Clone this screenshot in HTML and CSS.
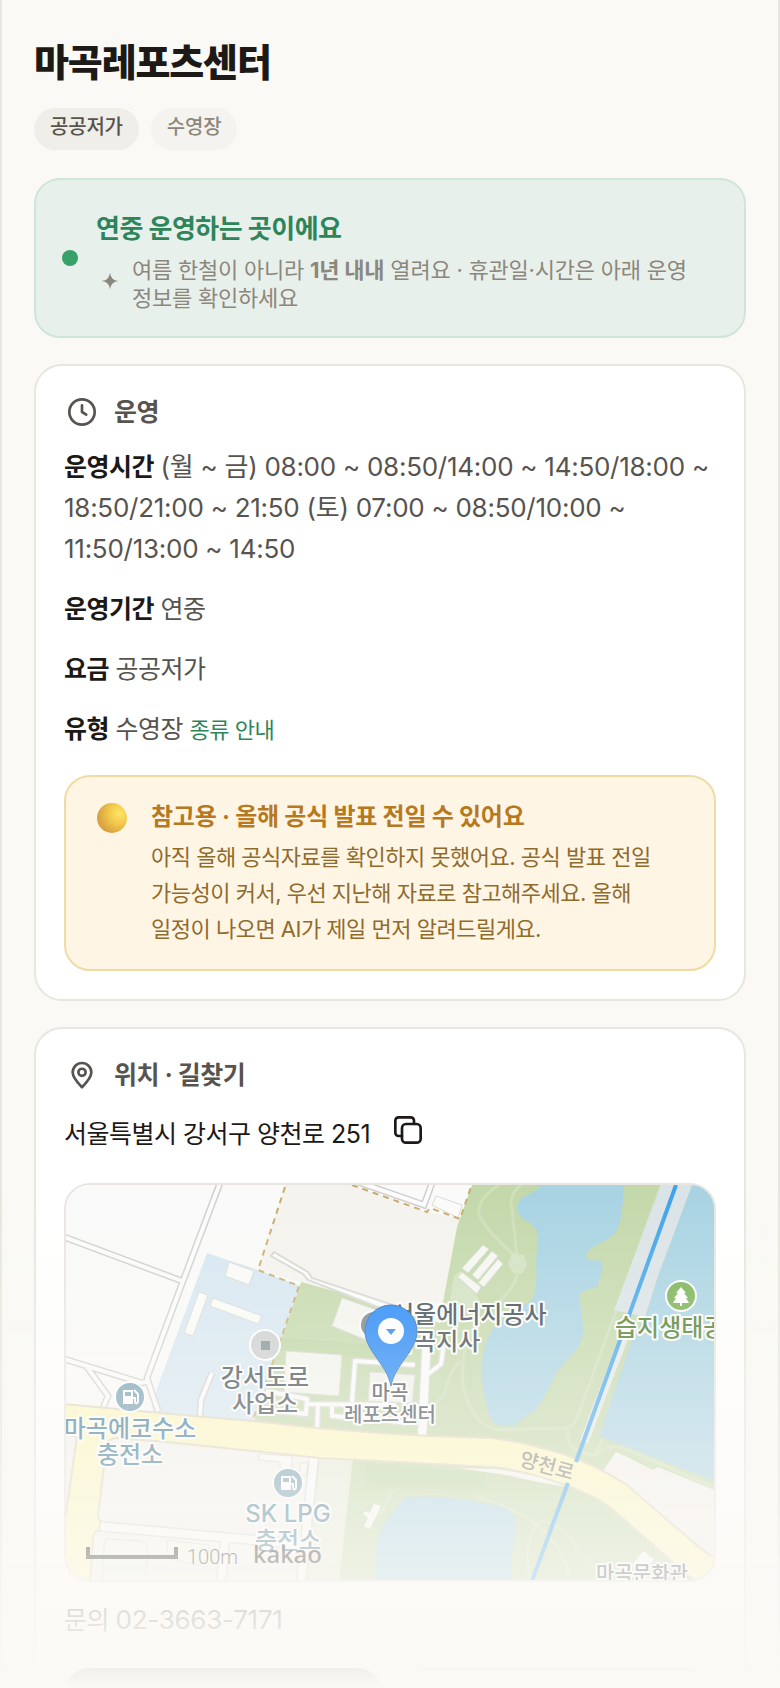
FILE: index.html
```html
<!DOCTYPE html>
<html lang="ko">
<head>
    <meta charset="UTF-8">
    <meta name="viewport" content="width=device-width, initial-scale=1.0">
    <title>마곡레포츠센터</title>
    <link rel="stylesheet" href="styles.css">
</head>
<body>
    <main class="screen">
        <h1>마곡레포츠센터</h1>
        <div class="chips">
            <span class="chip">공공저가</span>
            <span class="chip chip-light">수영장</span>
        </div>

        <section class="status">
            <span class="status-dot"></span>
            <div class="status-body">
                <h2 class="status-title">연중 운영하는 곳이에요</h2>
                <div class="status-note">
                    <svg class="spark" viewBox="0 0 24 24" aria-hidden="true"><path d="M12 2Q13 11 22 12Q13 13 12 22Q11 13 2 12Q11 11 12 2Z"/></svg>
                    <p>여름 한철이 아니라 <b>1년 내내</b> 열려요 · 휴관일·시간은 아래 운영 정보를 확인하세요</p>
                </div>
            </div>
        </section>

        <section class="card">
            <h2 class="card-title">
                <svg class="icon" viewBox="0 0 24 24" aria-hidden="true"><circle cx="12" cy="12" r="9.5"/><path d="M12 7v5l3.2 1.9"/></svg>
                운영
            </h2>
            <div class="rows">
                <p><b>운영시간</b> <span class="num">(월 ~ 금) 08:00 ~ 08:50/14:00 ~ 14:50/18:00 ~ 18:50/21:00 ~ 21:50 (토) 07:00 ~ 08:50/10:00 ~ 11:50/13:00 ~ 14:50</span></p>
                <p><b>운영기간</b> 연중</p>
                <p><b>요금</b> 공공저가</p>
                <p><b>유형</b> 수영장 <a class="type-link" href="#">종류 안내</a></p>
            </div>
            <div class="notice">
                <span class="orb"></span>
                <div>
                    <h3 class="notice-title">참고용 · 올해 공식 발표 전일 수 있어요</h3>
                    <p class="notice-text">아직 올해 공식자료를 확인하지 못했어요. 공식 발표 전일 가능성이 커서, 우선 지난해 자료로 참고해주세요. 올해 일정이 나오면 AI가 제일 먼저 알려드릴게요.</p>
                </div>
            </div>
        </section>

        <section class="card">
            <h2 class="card-title">
                <svg class="icon" viewBox="0 0 24 24" aria-hidden="true"><path d="M12 21.2C8 17.2 5 13.8 5 10a7 7 0 0 1 14 0c0 3.8-3 7.2-7 11.2Z"/><circle cx="12" cy="10" r="2.7"/></svg>
                위치 · 길찾기
            </h2>
            <div class="address">
                <span>서울특별시 강서구 양천로 251</span>
                <button class="copy" type="button" aria-label="주소 복사">
                    <svg viewBox="0 0 24 24" aria-hidden="true"><path d="M7.5 16.5H5A2.5 2.5 0 0 1 2.5 14V5A2.5 2.5 0 0 1 5 2.5H14A2.5 2.5 0 0 1 16.5 5V7.5"/><rect x="7.5" y="7.5" width="14" height="14" rx="3"/></svg>
                </button>
            </div>

            <div class="map">
                <svg viewBox="0 0 648 395" preserveAspectRatio="xMidYMid slice" role="img" aria-label="지도">
                    <rect width="648" height="395" fill="#fafafa"/>
                    <!-- 땅, 공원 -->
                    <path fill="#f5f3ee" d="M0 250H260L236 396H0ZM219 0L192 85L235 97L330 128L378 117L391 42L394 33L361 27L286 0Z"/>
                    <path fill="#c3d8aa" d="M406 0L391 42L377 117L374 138L327 122L235 97L207 177L187 240L254 273L236 396H648V0Z"/>
                    <path fill="#e6ebd8" d="M254 273H287L273 396H236Z"/>
                    <path fill="#d6e7f2" d="M141 68L192 85L234 101L207 177L187 240L87 228L86 217Z"/>
                    <path fill="#bdd4a2" d="M214 152L320 161L318 174L214 166ZM300 278L420 288L416 306L298 302Z"/>
                    <!-- 산책로 -->
                    <g fill="none" stroke="#cedfba" stroke-width="3">
                        <path d="M433 0Q410 15 413 30Q420 45 450 72M455 0Q442 10 446 24L451 72M452 85Q450 105 424 124L405 145Q395 165 397 200Q405 240 432 245L501 243Q508 242 512 230L548 132L595 0M395 176Q385 182 378 210L366 222"/>
                        <path d="M502 245Q500 262 514 266L528 271L537 254M528 271Q540 258 560 264L648 302M412 312Q470 330 490 360Q505 385 502 396M475 335Q455 355 465 396M475 335Q505 345 510 365L530 385M326 306L314 330"/>
                    </g>
                    <path fill="#d2e1c0" d="M446 68l12 2 3 10-5 9-9-1-5-9ZM388 91l6-5 20 30-10 8-20-10Z"/>
                    <!-- 물 -->
                    <g fill="#a8d3e3">
                        <path d="M476 0Q468 8 457 12Q449 20 452 27Q455 34 461 36Q473 43 472 55L470 74Q472 110 464 117Q455 122 450 120L427 144Q412 165 417 204L423 230Q428 242 440 241L449 240Q463 228 469 226Q480 210 491 187L511 164Q519 150 517 139L513 110Q514 106 531 102Q535 90 537 82Q537 75 531 75Q520 76 520 72Q520 67 527 62L545 52Q554 45 555 30Q558 15 558 0Z"/>
                        <path d="M626 0L592 91L579 131L567 152L533 251L648 296V0Z"/>
                        <path d="M339 312Q375 310 407 316L433 321Q451 324 450 342L446 367V396H309L311 354L317 340Z"/>
                    </g>
                    <path fill="#dae3e7" d="M595 0H626L592 91L579 132L548 125Z"/>
                    <path d="M558 152L518 257" fill="none" stroke="#e4e9ea" stroke-width="9"/>
                    <path fill="#f5f2ed" d="M537 286L550 267L563 273L587 285L592 282L648 305V372L561 302Z"/>
                    <!-- 건물 -->
                    <g fill="#fbfbf9" stroke="#d9d9d6">
                        <path d="M163 77L188 86L183 100L159 91ZM133 107L142 110L127 151L118 148ZM147 113L196 131L192 139L144 121ZM370 11L396 20L392 33L366 20Z"/>
                        <path fill="#f3f5ee" d="M276 113L328 131L310 159L266 141ZM220 166L276 170L273 211L218 207Z"/>
                        <path d="M304 187L349 190L346 218L302 216Z" fill="#f1f2ec"/>
                        <path d="M193 269L226 271V286H214V277L193 275ZM234 278H242L240 290H234Z"/>
                        <path d="M101 355L143 360L141 382L102 373Z" fill="#f5f6f0"/>
                        <path d="M40 354L75 356Q82 358 81 364V382Q79 394 75 396H36L38 364Q38 355 40 354Z" fill="#f3f5ec"/>
                    </g>
                    <g fill="#f6f7f3" stroke="#d5dccb">
                        <path d="M417 60L423 64L402 88L396 83ZM426 66L432 71L412 95L406 90ZM432 74L437 79L418 102L412 98ZM396 87L415 102L411 109L392 92Z"/>
                    </g>
                    <path fill="#f8faf6" d="M308 319L315 321L304 344L298 341L302 333L297 329L299 326L304 328ZM577 366L588 374L578 390L566 380Z"/>
                    <!-- 좁은 길: 회색 선 위에 흰 선 -->
                    <path d="M154 -2L117 96L81 193L92 226M-2 52L116 96M-2 174L76 198L83 196M21 182L42 211L37 223M292 -3L358 20L366 -2M146 188L135 215L134 231" fill="none" stroke="#cfcfcf" stroke-width="7"/>
                    <path d="M154 -2L117 96L81 193L92 226M-2 52L116 96M-2 174L76 198L83 196M21 182L42 211L37 223M292 -3L358 20L366 -2M146 188L135 215L134 231" fill="none" stroke="#fcfcfc" stroke-width="4"/>
                    <path fill="#fcfcfc" stroke="#d6d6d3" stroke-width="2" d="M208 67L242 87L246 93L330 121L330 129L242 95L237 89L205 71Z"/>
                    <g fill="none" stroke="#d6d9d2" stroke-linejoin="round">
                        <path stroke-width="7" d="M252 218L251 246M286 217L289 176L349 180M200 206L241 214L240 229L210 226M240 219L330 220M266 219V231L345 238M362 189L375 179L379 150"/>
                        <path stroke-width="11" d="M361 150L356 252M32 341L154 352L235 359M248 274L235 398M159 355L155 398"/>
                    </g>
                    <g fill="none" stroke="#fcfcfc" stroke-linejoin="round">
                        <path stroke-width="4" d="M252 218L251 248M286 217L289 176L349 180M200 206L241 214L240 229L210 226M240 219L330 220M266 219V231L345 238M362 189L375 179L379 150"/>
                        <path stroke-width="8" d="M361 150L356 254M30 341L154 352L235 359M248 272L235 398M159 355L155 398"/>
                    </g>
                    <!-- 양천로 -->
                    <path fill="#fdf8bf" stroke="#dfd6bd" stroke-width="2" d="M-3 219L127 231L187 236L251 243L314 248L364 251L424 253Q455 256 497 269Q530 280 561 300L637 366L651 374V398H631L544 322Q520 305 474 292Q450 284 424 282L314 276L254 273L187 266L101 257L51 253Q42 254 41 259L32 329Q32 335 35 336L33 345Q28 345 27 353L24 398H-3V333L0 329L11 251L-3 250Z"/>
                    <path fill="#f8f6f0" d="M392 283L430 284Q475 290 500 302Q470 297 440 290Z"/>
                    <path d="M219 2L192 85L233 101L207 177L187 235M286 0L361 27L364 23L394 34L405 2" fill="none" stroke="#c9ab6a" stroke-width="2" stroke-dasharray="6 5"/>
                    <path d="M610 0L510 277M502 298L466 396" fill="none" stroke="#3ea3ea" stroke-width="4"/>

                    <!-- 아이콘 -->
                    <g stroke="#fff" stroke-width="2">
                        <circle cx="308" cy="140" r="14" fill="#728087"/>
                        <circle cx="199" cy="160" r="15" fill="#cbcdd0"/>
                        <circle cx="64" cy="212" r="15" fill="#6d9bb0"/>
                        <circle cx="222" cy="298" r="15" fill="#6d9bb0"/>
                        <circle cx="615" cy="111" r="15" fill="#76b04e"/>
                    </g>
                    <path fill="#7d8c92" d="M195 156h9v9h-9Z"/>
                    <path fill="#fff" d="M615 102l5 6h-2l4 5h-2l3 5h-7v3h-2v-3h-7l3-5h-2l4-5h-2Z"/>
                    <g fill="none" stroke="#fff" stroke-width="2">
                        <path fill="#fff" d="M58 206h8v12h-8Z"/><path d="M68 205l4 4v8q-2 3-3 0v-4h-2"/>
                        <path fill="#fff" d="M216 292h8v12h-8Z"/><path d="M226 291l4 4v8q-2 3-3 0v-4h-2"/>
                    </g>
                    <path fill="#6d9bb0" d="M59 207h6v4h-6ZM217 293h6v4h-6Z"/>

                    <!-- 지명 -->
                    <g class="place" text-anchor="middle">
                        <text x="199" y="201">강서도로</text>
                        <text x="199" y="227">사업소</text>
                        <g class="station">
                            <text x="64" y="252">마곡에코수소</text>
                            <text x="64" y="278">충전소</text>
                            <text x="222" y="337">SK LPG</text>
                            <text x="222" y="364">충전소</text>
                        </g>
                    </g>
                    <g class="place">
                        <text x="326" y="138">서울에너지공사</text>
                        <text x="326" y="165">마곡지사</text>
                        <text class="eco" x="549" y="151">습지생태공원</text>
                    </g>
                    <g class="place place-small" text-anchor="middle">
                        <text x="324" y="215">마곡</text>
                        <text x="324" y="237">레포츠센터</text>
                        <text x="576" y="396">마곡문화관</text>
                    </g>
                    <text class="road" x="481" y="288" text-anchor="middle" transform="rotate(15 481 281)">양천로</text>

                    <path d="M22 362V372H110V362" fill="none" stroke="#111" stroke-width="4"/>
                    <text class="scale" x="121" y="379">100m</text>
                    <text class="brand" x="187" y="378">kakao</text>

                    <!-- 핀 -->
                    <path fill="#1a82f7" stroke="#1f62bd" d="M325 201C321 179 299 166 299 146a26 26 0 0 1 52 0C351 166 329 179 325 201Z"/>
                    <circle cx="325" cy="146" r="13" fill="#fff"/>
                    <path fill="#1a82f7" d="M320 144h10l-5 6Z"/>
                </svg>
            </div>

            <p class="contact">문의 <span class="num">02-3663-7171</span></p>
            <div class="actions">
                <button class="btn btn-dark" type="button"></button>
                <button class="btn" type="button"></button>
            </div>
        </section>
    </main>
    <div class="fade"></div>
</body>
</html>
```
FILE: styles.css
```css
* {
    box-sizing: border-box;
}
body {
    margin: 0;
    font-family: Inter, "Noto Sans CJK KR", sans-serif;
    font-size: 25px;
    line-height: 41px;
    letter-spacing: -0.02em;
    word-break: keep-all;
    color: #1c1917;
    background-color: #faf9f5;
}
h1, h2, h3, p {
    margin: 0;
}
.screen {
    height: 100vh;
    overflow: hidden;
    padding: 36px 32px 0;
    border-left: 2px solid #e8e6df;
    border-right: 2px solid #e8e6df;
}
h1 {
    font-size: 38px;
    line-height: 52px;
    font-weight: 800;
    letter-spacing: -0.03em;
}
.chips {
    display: flex;
    gap: 12px;
    margin: 20px 0 28px;
}
.chip {
    padding: 4px 16px 8px;
    border-radius: 21px;
    font-size: 20px;
    line-height: 30px;
    font-weight: 500;
    letter-spacing: -0.01em;
    color: #57534e;
    background-color: #f0eee8;
}
.chip-light {
    color: #8c877d;
    background-color: #f4f3ef;
}
.status {
    display: flex;
    align-items: center;
    gap: 18px;
    padding: 24px 26px;
    border: 2px solid #d0e5da;
    border-radius: 26px;
    background-color: #e8f0eb;
}
.status-dot {
    flex: none;
    width: 16px;
    height: 16px;
    border-radius: 50%;
    background-color: #38a169;
}
.status-title {
    font-size: 26px;
    line-height: 50px;
    font-weight: 700;
    color: #2f855a;
}
.status-note {
    display: flex;
    align-items: center;
    gap: 12px;
    padding-top: 2px;
    font-size: 22px;
    line-height: 28px;
    letter-spacing: -0.01em;
    color: #8c877d;
}
.spark {
    flex: none;
    width: 20px;
    height: 20px;
    margin: 0 0 6px 4px;
    fill: currentColor;
}
.card {
    margin-top: 26px;
    padding: 28px;
    border: 2px solid #e8e6df;
    border-radius: 28px;
    background-color: #fff;
}
.card-title {
    display: flex;
    align-items: center;
    gap: 14px;
    margin-bottom: 17px;
    font-size: 25px;
    line-height: 36px;
    font-weight: 700;
    color: #57534e;
}
.icon {
    width: 32px;
    height: 32px;
    margin: 0 2px;
    fill: none;
    stroke: currentColor;
    stroke-width: 2;
    stroke-linecap: round;
    stroke-linejoin: round;
}
.rows {
    display: grid;
    gap: 19px;
    color: #57534e;
}
.rows b {
    color: #1c1917;
}
.num {
    font-size: 26px;
    line-height: 26px;
    letter-spacing: -0.01em;
}
.type-link {
    font-size: 22px;
    line-height: 26px;
    color: #2f855a;
    text-decoration: none;
}
.notice {
    display: flex;
    gap: 24px;
    margin-top: 25px;
    padding: 22px 31px;
    border: 2px solid #f0dba5;
    border-radius: 26px;
    background-color: #fff5e5;
}
.orb {
    flex: none;
    width: 30px;
    height: 30px;
    margin-top: 4px;
    border-radius: 50%;
    background: radial-gradient(circle at 75% 35%, #ffe566 0%, #f2c94c 35%, #d9a441 70%, #d98a5b 100%);
}
.notice-title {
    margin-bottom: 4px;
    font-size: 24px;
    line-height: 36px;
    font-weight: 700;
    letter-spacing: -0.01em;
    color: #b7791f;
}
.notice-text {
    font-size: 22px;
    line-height: 36px;
    color: #8f6b2c;
}
.address {
    display: flex;
    align-items: center;
    gap: 22px;
    padding-top: 4px;
}
.copy {
    width: 32px;
    height: 32px;
    margin-bottom: 9px;
    padding: 0;
    border: 0;
    background: none;
    cursor: pointer;
}
.copy svg {
    display: block;
    width: 32px;
    height: 32px;
    fill: none;
    stroke: #1c1917;
    stroke-width: 2;
    stroke-linecap: round;
}
.map {
    height: 399px;
    margin-top: 28px;
    border: 2px solid #e8e6df;
    border-radius: 26px;
    overflow: hidden;
}
.map svg {
    display: block;
    width: 100%;
    height: 100%;
    letter-spacing: 0;
}
.place {
    font-size: 24px;
    font-weight: 500;
    fill: #39454c;
    stroke: #fff;
    stroke-width: 4px;
    stroke-linejoin: round;
    paint-order: stroke;
}
.place-small {
    font-size: 20px;
}
.station {
    fill: #37748f;
}
.eco {
    fill: #4a7a2e;
}
.road {
    font-size: 20px;
    font-weight: 500;
    fill: #80807c;
}
.scale {
    font-family: Roboto, sans-serif;
    font-size: 20px;
    font-weight: 300;
    fill: #111;
}
.brand {
    font-family: "Noto Sans", sans-serif;
    font-size: 24px;
    font-weight: 500;
    fill: #111;
}
.contact {
    margin-top: 18px;
    color: #57534e;
}
.actions {
    display: grid;
    grid-template-columns: 1fr 1fr;
    gap: 14px;
    margin-top: 27px;
}
.btn {
    height: 88px;
    border: 2px solid #8fcfb0;
    border-radius: 26px;
    background-color: #fff;
}
.btn-dark {
    border-color: #1c1917;
    background-color: #1c1917;
}
/* 아래쪽으로 갈수록 내용이 흐려지는 막 */
.fade {
    position: fixed;
    left: 0;
    right: 0;
    bottom: 0;
    height: 500px;
    background: linear-gradient(rgba(250, 249, 245, 0), #faf9f5);
    pointer-events: none;
}
```
